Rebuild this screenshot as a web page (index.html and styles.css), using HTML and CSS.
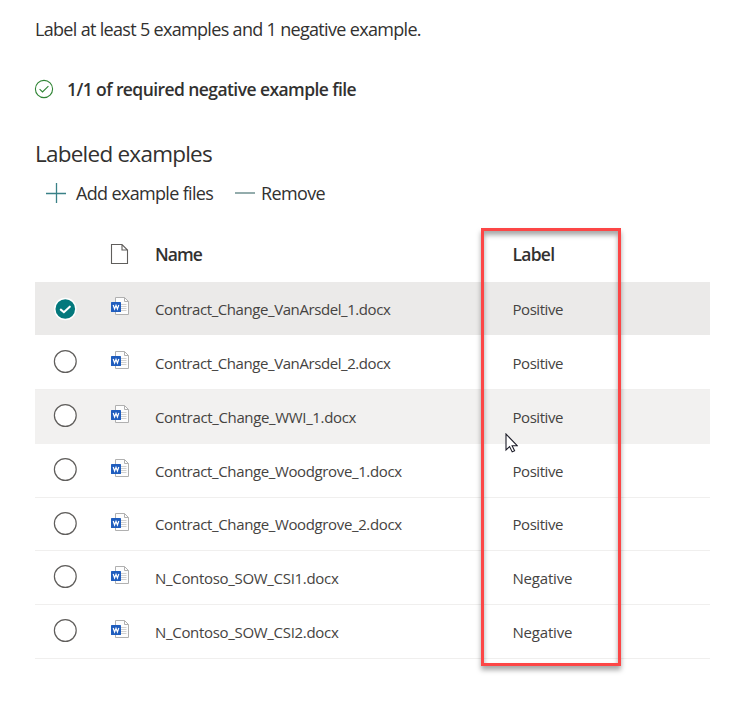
FILE: index.html
```html
<!DOCTYPE html>
<html lang="en">
<head>
<meta charset="utf-8">
<title>Labeled examples</title>
<link rel="stylesheet" href="styles.css">
</head>
<body>
<svg class="defs" width="0" height="0" aria-hidden="true">
  <symbol id="word" viewBox="0 0 20 20">
    <path d="M5.5 1.5H14.5L18.5 5.5V18.5H5.5Z" fill="#fdfdfd" stroke="#b0b0b0"/>
    <path d="M14.5 1.5V5.5H18.5" fill="none" stroke="#b0b0b0"/>
    <path d="M11 8.5H16.5M11 10.5H16.5M11 12.5H16.5M11 14.5H16.5" stroke="#d0d0d0"/>
    <rect x="1" y="6" width="10" height="10" rx=".6" fill="#1f5dbe"/>
    <path d="M3.2 9L4.6 13L6 9.4L7.4 13L8.8 9" fill="none" stroke="#fff" stroke-width="1.2"/>
  </symbol>
  <symbol id="ring" viewBox="0 0 24 24"><circle cx="12.3" cy="12.5" r="10.9" fill="#fff" stroke="#605e5c" stroke-width="1.2"/></symbol>
</svg>
<main class="panel">
  <p class="intro">Label at least 5 examples and 1 negative example.</p>
  <div class="status">
    <svg class="status-icon" viewBox="0 0 20 20"><g fill="none" stroke="#2f8434" stroke-width="1.1"><circle cx="10" cy="10" r="8.6"/><path d="M5.6 10.2L8.5 13L14.4 7.1"/></g></svg>
    <span class="status-text">1/1 of required negative example file</span>
  </div>
  <h2 class="title">Labeled examples</h2>
  <div class="commands">
    <svg class="cmd-icon" viewBox="0 0 20 20"><path d="M0 10.5H20M10.5 0V20" stroke="#3a8187" stroke-width="1.3"/></svg>
    <span class="add">Add example files</span>
    <svg class="cmd-icon" viewBox="0 0 20 20"><path d="M0 10H20" stroke="#789898" stroke-width="1.6"/></svg>
    <span class="remove">Remove</span>
  </div>
  <div class="table">
    <div class="row head">
      <span></span>
      <svg class="file" viewBox="0 0 20 22"><path d="M2.5 1.5H13L18.5 7V20.5H2.5ZM13 1.5V7H18.5" fill="#fff" stroke="#605e5c" stroke-width="1.1"/></svg>
      <span class="h-name">Name</span><span class="h-label">Label</span>
    </div>
    <div class="row selected">
      <svg class="check on" viewBox="0 0 24 24"><circle cx="12.3" cy="12" r="11.2" fill="#fff"/><circle cx="12.3" cy="12" r="9.8" fill="#03787c"/><path d="M7.8 12.6L10.9 15.2L16.8 9.7" fill="none" stroke="#fff" stroke-width="2.1" stroke-linecap="round"/></svg>
      <svg class="doc"><use href="#word"/></svg><span class="n1">Contract_Change_VanArsdel_1.docx</span><span class="pos">Positive</span>
    </div>
    <div class="row"><svg class="check"><use href="#ring"/></svg><svg class="doc"><use href="#word"/></svg><span class="n1">Contract_Change_VanArsdel_2.docx</span><span class="pos">Positive</span></div>
    <div class="row hover"><svg class="check"><use href="#ring"/></svg><svg class="doc"><use href="#word"/></svg><span class="n2">Contract_Change_WWI_1.docx</span><span class="pos">Positive</span></div>
    <div class="row"><svg class="check"><use href="#ring"/></svg><svg class="doc"><use href="#word"/></svg><span class="n3">Contract_Change_Woodgrove_1.docx</span><span class="pos">Positive</span></div>
    <div class="row short"><svg class="check"><use href="#ring"/></svg><svg class="doc"><use href="#word"/></svg><span class="n3">Contract_Change_Woodgrove_2.docx</span><span class="pos">Positive</span></div>
    <div class="row"><svg class="check"><use href="#ring"/></svg><svg class="doc"><use href="#word"/></svg><span class="n4">N_Contoso_SOW_CSI1.docx</span><span class="neg">Negative</span></div>
    <div class="row"><svg class="check"><use href="#ring"/></svg><svg class="doc"><use href="#word"/></svg><span class="n4">N_Contoso_SOW_CSI2.docx</span><span class="neg">Negative</span></div>
  </div>
</main>
<div class="callout"></div>
<svg class="cursor" viewBox="0 0 13 20"><path d="M1 1V17L4.6 13.6L7.2 18.9L9.6 17.8L7.1 12.7H12.2Z" fill="#fff" stroke="#1c1c28" stroke-width="1.1"/></svg>
</body>
</html>
```

FILE: styles.css
```css
* { box-sizing: border-box; }
body {
  margin: 0;
  background: #fff;
  color: #323130;
  font-family: "Open Sans", "Noto Sans", sans-serif;
  white-space: nowrap;
}
.defs { position: absolute; }
.panel { width: 675px; margin-left: 35px; padding-top: 15px; }
.intro { margin: 0; height: 30px; font-size: 18px; line-height: 29px; letter-spacing: -.68px; }
.status { display: flex; align-items: center; height: 30px; margin-top: 30px; }
.status-icon { width: 20px; height: 20px; margin: 0 13px 2px -1px; }
.status-text { padding-bottom: 2px; font-size: 17.5px; font-weight: 600; letter-spacing: -.58px; }
.title { margin: 34px 0 0; height: 30px; font-size: 22.5px; font-weight: 400; line-height: 29px; letter-spacing: -.76px; }
.commands { display: flex; align-items: center; height: 30px; margin-top: 9px; padding-left: 11px; font-size: 18px; }
.cmd-icon { width: 20px; height: 20px; margin-right: 10px; }
.add { width: 159px; letter-spacing: -.66px; }
.add + .cmd-icon { margin-right: 6px; }
.remove { letter-spacing: -.64px; }
.table { margin-top: 20px; }
.row {
  display: grid;
  grid-template-columns: 75px 45px 357.5px 1fr;
  align-items: center;
  height: 54px;
  border-bottom: 1px solid #f0efee;
  font-size: 15px;
  color: #454341;
}
.row.head { height: 54px; border: 0; font-size: 17.5px; font-weight: 600; color: #323130; }
.row.short { height: 53px; }
.row.selected { background: #ebeae9; background-clip: padding-box; border-color: #fff; }
.row.hover { background: #f2f1f0; border-color: #f2f1f0; }
.row span { padding-top: 1px; }
.row.short span { padding: 0 0 1px; }
.row.head span { padding: 0 0 2px; }
.h-name { letter-spacing: -.9px; }
.h-label { letter-spacing: -.75px; }
.n1 { letter-spacing: -.42px; }
.n2 { letter-spacing: -.35px; }
.n3 { letter-spacing: -.37px; }
.n4 { letter-spacing: -.31px; }
.pos { letter-spacing: -.45px; }
.neg { letter-spacing: -.2px; }
.check { width: 24px; height: 24px; margin: 0 0 3px 18px; }
.check.on { margin-bottom: 0; }
.doc { width: 20px; height: 20px; margin-bottom: 5px; }
.file { width: 20px; height: 22px; margin: 0 0 2px -1px; }
.callout {
  position: absolute;
  left: 481px;
  top: 228px;
  width: 140px;
  height: 438px;
  border: 3px solid #fc4646;
  box-shadow: 0 4px 5px rgba(0,0,0,.35), inset 0 4px 5px rgba(0,0,0,.35);
}
.cursor { position: absolute; left: 504.5px; top: 433px; width: 13px; height: 20px; }
```
